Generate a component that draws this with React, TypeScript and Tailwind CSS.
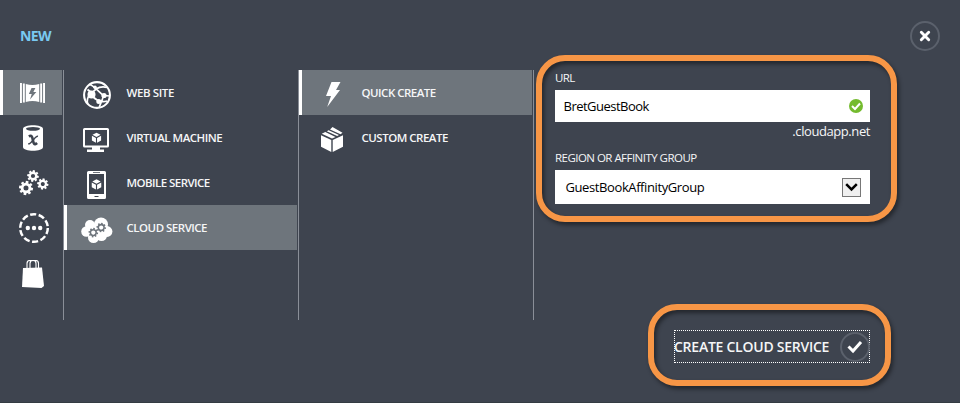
import React from "react";

const WHITE = "#ffffff";

function Gear({ x, y, r, hole, color = WHITE, tooth = 2.2 }: { x: number; y: number; r: number; hole: number; color?: string; tooth?: number }) {
  const body = r * 0.76;
  return (
    <g transform={`translate(${x} ${y})`} stroke={color} fill="none">
      <circle r={(body + hole) / 2} strokeWidth={body - hole} />
      {[0, 45, 90, 135, 180, 225, 270, 315].map((a) => (
        <line key={a} x1={body - 0.5} x2={r} y1="0" y2="0" strokeWidth={tooth} transform={`rotate(${a + 10})`} />
      ))}
    </g>
  );
}

function Cube({ x, y, s }: { x: number; y: number; s: number }) {
  return (
    <g transform={`translate(${x} ${y}) scale(${s})`} fill={WHITE}>
      <path d="M0-5.6 4.4-3.2 0-.9-4.4-3.2ZM-5-2.2-.6.2V5.3L-5 2.9ZM5-2.2.6.2V5.3L5 2.9Z" />
    </g>
  );
}

function CloudServicesIcon() {
  return (
    <svg width="25" height="20" viewBox="0 0 26 20" preserveAspectRatio="none" fill={WHITE}>
      <path d="M0 0h2v20H0zM3 .5h2v19H3zM21 .5h2v19h-2zM24 0h2v20h-2z" />
      <path fillRule="evenodd" d="M6 1q7 2 14 0v18q-7-2-14 0ZM12 5l-2.800 6h3l-1.800 5.500L17 9h-3.100L16 5Z" />
    </svg>
  );
}

function DatabaseIcon() {
  return (
    <svg width="20" height="26" viewBox="0 0 20 26">
      <path d="M0 3.800C0-1.100 20-1.100 20 3.800V22c0 5-20 5-20 0Z" fill={WHITE} />
      <ellipse cx="10" cy="3.800" rx="7" ry="1.900" fill="#3e444f" />
      <g fill="none" stroke="#3e444f">
        <path d="M5.800 11.400c3.300-1.800 3.600 1.200 4.100 3.800s1 5.600 4.200 2.800" strokeWidth="2.600" />
        <path d="M15 11.400c-3-.8-6.400 8-9.800 7.400" strokeWidth="1.500" />
      </g>
    </svg>
  );
}

function GearsIcon() {
  return (
    <svg width="30" height="26" viewBox="0 0 30 26">
      <Gear x={14} y={6} r={5.8} hole={2.1} />
      <Gear x={23.8} y={14} r={5.6} hole={2} />
      <Gear x={7} y={18} r={7} hole={2.5} tooth={2.7} />
    </svg>
  );
}

function NetworkIcon() {
  return (
    <svg width="32" height="32" viewBox="0 0 32 32">
      <circle cx="16" cy="16" r="13.800" fill="none" stroke={WHITE} strokeWidth="2.500" strokeDasharray="6.200 2.470" />
      <circle cx="9.800" cy="16" r="2.200" fill={WHITE} />
      <circle cx="16" cy="16" r="2.200" fill={WHITE} />
      <circle cx="22.200" cy="16" r="2.200" fill={WHITE} />
    </svg>
  );
}

function StoreIcon() {
  return (
    <svg width="22" height="28" viewBox="0 0 22 28">
      <path d="M1 8 20 7.500 22 26 19.500 28 0 27Z" fill={WHITE} />
      <path d="M5 8V3.500q0-3 3-3h3q3 0 3 3V8M8 8V3.500q0-3 3-3h2.500q3 0 3 3V8" fill="none" stroke={WHITE} strokeWidth="1.100" />
    </svg>
  );
}

function WebIcon() {
  return (
    <svg width="28" height="28" viewBox="0 0 28 28" fill="none" stroke={WHITE}>
      <circle cx="14" cy="14" r="12.900" strokeWidth="2.100" />
      <path d="M7 3.500C11 5 17 12 20.500 14.500M8 14C12 7 18 5 24 6.500M9 14C11 18 17 22 24 20M7 13C4 17 4 21 5 23M20.500 14.500 27 15M20.500 14.500C20 18 18 21 16 27" strokeWidth="1.700" />
      <path d="M4.500 8.500 9 12" strokeWidth="2" />
      <g fill={WHITE} stroke="none">
        <circle cx="8.500" cy="13.600" r="4" />
        <circle cx="21" cy="14.500" r="2.600" />
        <circle cx="15.800" cy="20.600" r="2.500" />
        <circle cx="12" cy="6.300" r="1.800" />
      </g>
    </svg>
  );
}

function MonitorIcon() {
  return (
    <svg className="-ml-[2px]" width="26" height="24" viewBox="0 0 26 24">
      <rect x="1" y="1" width="24" height="17.500" rx=".6" fill="none" stroke={WHITE} strokeWidth="2" />
      <path d="M9 19h8v2.500h4V24H4v-2.500h5Z" fill={WHITE} />
      <Cube x={13.5} y={9.8} s={0.92} />
    </svg>
  );
}

function PhoneIcon() {
  return (
    <svg width="20" height="28" viewBox="0 0 20 28">
      <path fillRule="evenodd" fill={WHITE} d="M1.500 0h16Q19 0 19 1.500v25Q19 28 17.500 28h-16Q0 28 0 26.500v-25Q0 0 1.500 0ZM2 3v20h15V3ZM6 1.200v.8h7v-.8ZM7.500 25v1h4v-1Z" />
      <Cube x={9.5} y={13.5} s={0.95} />
    </svg>
  );
}

function CloudIcon() {
  return (
    <svg width="32" height="26" viewBox="0 0 32 26">
      <g fill={WHITE}>
        <circle cx="9" cy="8" r="5" />
        <circle cx="20" cy="7.500" r="7" />
        <circle cx="5.500" cy="14.500" r="5.300" />
        <circle cx="26" cy="14.500" r="5.400" />
        <circle cx="12.500" cy="20.500" r="5.500" />
        <circle cx="20.500" cy="18.500" r="5.500" />
        <path d="M7 7h18v12H7Z" />
      </g>
      <Gear x={12.3} y={15.6} r={4.8} hole={2.1} color="#6e757c" tooth={1.6} />
      <Gear x={20.2} y={10.5} r={4.8} hole={2.1} color="#6e757c" tooth={1.6} />
    </svg>
  );
}

function BoltIcon() {
  return (
    <svg className="mt-px ml-[3px]" width="16" height="26" viewBox="0 0 16 26" fill={WHITE}>
      <path d="M5.500 0H14.500L10 8H14L1.200 25 5 14H0Z" />
    </svg>
  );
}

function BoxIcon() {
  return (
    <svg width="22" height="25" viewBox="0 0 22 25" fill={WHITE}>
      <path d="M0 8.200 10.300 13V25L0 19.800ZM22 8.200 11.700 13V25L22 19.800ZM.8 6.800 4.300 5 14.500 9.900 11 11.600ZM5.800 4.200 7.600 3.300 18 8.100 16.200 9ZM9 2.600 11.500 0 21.500 5.800 19.500 7.300Z" />
    </svg>
  );
}

function RailItem({ active, children }: { active?: boolean; children: React.ReactNode }) {
  return (
    <div className={active ? "flex h-[45px] items-center border-l-[3px] border-white bg-[#6e757c] pl-[17px]" : "flex h-[45px] items-center pl-[18px]"}>
      {children}
    </div>
  );
}

function MenuItem({ active, icon, label, tracking }: { active?: boolean; icon: React.ReactNode; label: string; tracking: string }) {
  return (
    <div className={`flex h-[45px] w-[233px] items-center border-l-[3px] text-[11.5px] font-semibold ${active ? "border-white bg-[#6e757c]" : "border-transparent"}`}>
      <span className="flex w-[60px] shrink-0 justify-center pt-1">{icon}</span>
      <span className={`-ml-[0.5px] whitespace-nowrap ${tracking}`}>{label}</span>
    </div>
  );
}

export default function App() {
  return (
    <div className="relative flex h-[403px] w-[960px] flex-col overflow-hidden border-b border-[#343c42] bg-[#3e444f] font-['Open_Sans','Noto_Sans',sans-serif] text-[#f5f6f7]">
      <header className="flex h-[70px] shrink-0 items-center justify-between px-5">
        <h1 className="text-[14px] font-bold tracking-[-0.6px] text-[#79c9f1]">NEW</h1>
        <button className="mt-[2px] flex size-[30px] items-center justify-center rounded-full border-2 border-[#5b616c]" aria-label="Close">
          <svg width="12" height="12" viewBox="0 0 12 12" stroke={WHITE} strokeWidth="2.900" strokeLinecap="round">
            <path d="M2.300 2.300 9.700 9.700M9.700 2.300 2.300 9.700" />
          </svg>
        </button>
      </header>

      <main className="flex h-[332px]">
        <nav className="flex h-[250px] w-16 flex-col border-r border-[#8a8f98] pr-px">
          <RailItem active><CloudServicesIcon /></RailItem>
          <RailItem><span className="pl-[5px]"><DatabaseIcon /></span></RailItem>
          <RailItem><span className="pt-px pl-px"><GearsIcon /></span></RailItem>
          <RailItem><NetworkIcon /></RailItem>
          <RailItem><span className="pt-0.5 pl-1"><StoreIcon /></span></RailItem>
        </nav>
        <nav className="h-[250px] w-[235px] border-r border-[#8a8f98]">
          <MenuItem icon={<WebIcon />} label="WEB SITE" tracking="tracking-[-0.4px]" />
          <MenuItem icon={<MonitorIcon />} label="VIRTUAL MACHINE" tracking="tracking-[-0.48px]" />
          <MenuItem icon={<PhoneIcon />} label="MOBILE SERVICE" tracking="tracking-[-0.55px]" />
          <MenuItem active icon={<CloudIcon />} label="CLOUD SERVICE" tracking="tracking-[-0.5px]" />
        </nav>
        <nav className="h-[250px] w-[235px] border-r border-[#8a8f98]">
          <MenuItem active icon={<BoltIcon />} label="QUICK CREATE" tracking="tracking-[-0.5px]" />
          <MenuItem icon={<BoxIcon />} label="CUSTOM CREATE" tracking="tracking-[-0.5px]" />
        </nav>

        <section className="ml-[21px] flex w-[315px] flex-col">
          <label className="h-5 text-[11.5px] leading-4 tracking-[-0.6px]">URL</label>
          <div className="flex h-8 items-center justify-between bg-white pr-[7px] pl-[8.5px] text-[13px] text-black">
            <span className="pt-[2px] tracking-[-0.52px]">BretGuestBook</span>
            <svg width="14" height="14" viewBox="0 0 14 14">
              <circle cx="7" cy="7" r="7" fill="#74bb2e" />
              <path d="m3 7 3 3 5-5.500" fill="none" stroke={WHITE} strokeWidth="2" />
            </svg>
          </div>
          <div className="h-7 text-right text-[13px] leading-[19px] tracking-[-0.42px]">.cloudapp.net</div>
          <label className="h-5 text-[11.5px] leading-4 tracking-[-0.53px]">REGION OR AFFINITY GROUP</label>
          <div className="flex h-[34px] items-center justify-between bg-white pr-[9px] pl-[10.5px] text-[13px] text-black">
            <span className="pt-[2px] tracking-[-0.4px]">GuestBookAffinityGroup</span>
            <span className="flex size-[19px] items-center justify-center border border-[#777] bg-[#f0f0f0]">
              <svg width="13" height="9" viewBox="0 0 13 9" fill="none" stroke="#000" strokeWidth="2.500">
                <path d="m1.200 1.200 5.300 5.300L11.800 1.200" />
              </svg>
            </span>
          </div>
          <button className="mt-[126px] flex h-[33px] w-[196px] items-center justify-between self-end border border-dotted border-white text-[14px] font-semibold">
            <span className="-ml-px whitespace-nowrap tracking-[-0.25px]">CREATE CLOUD SERVICE</span>
            <span className="-mr-px flex size-[30px] shrink-0 items-center justify-center rounded-full border-2 border-[#5b616c]">
              <svg width="16" height="14" viewBox="0 0 16 14" fill="none" stroke={WHITE} strokeWidth="3">
                <path d="m1.500 6.500 4.500 4.500L14 2" />
              </svg>
            </span>
          </button>
        </section>
      </main>

      <div className="pointer-events-none absolute top-[55px] left-[536px] h-[167px] w-[361px] rounded-[29px] border-[6.5px] border-[#f79646] drop-shadow-[2px_3px_2px_rgba(0,0,0,0.45)]" />
      <div className="pointer-events-none absolute top-[304px] left-[648px] h-[82px] w-[243px] rounded-[29px] border-[6.5px] border-[#f79646] drop-shadow-[2px_3px_2px_rgba(0,0,0,0.45)]" />
    </div>
  );
}
